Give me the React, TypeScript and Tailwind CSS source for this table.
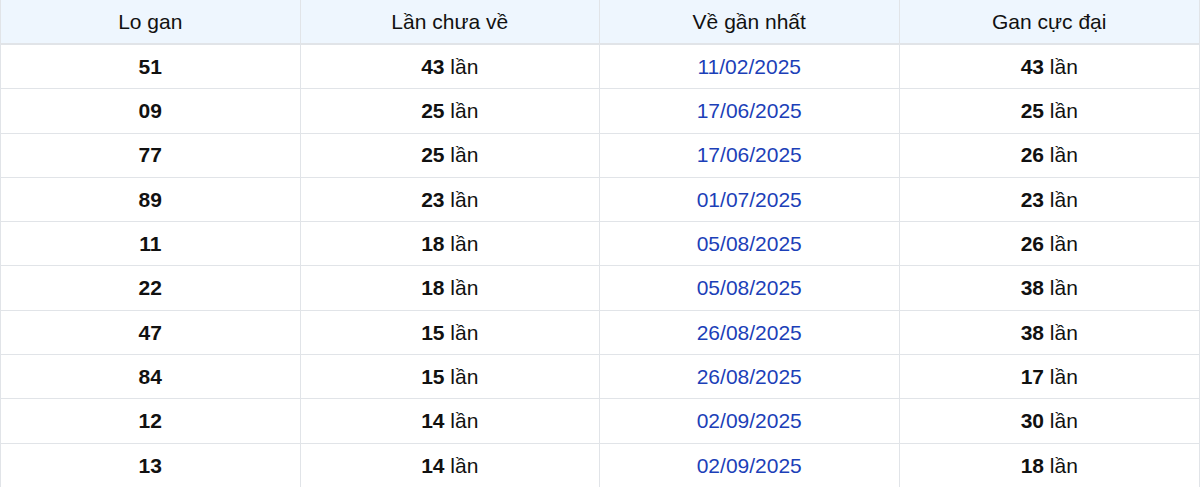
import React from "react";

const rows: [string, string, string, string][] = [
  ["51", "43", "11/02/2025", "43"],
  ["09", "25", "17/06/2025", "25"],
  ["77", "25", "17/06/2025", "26"],
  ["89", "23", "01/07/2025", "23"],
  ["11", "18", "05/08/2025", "26"],
  ["22", "18", "05/08/2025", "38"],
  ["47", "15", "26/08/2025", "38"],
  ["84", "15", "26/08/2025", "17"],
  ["12", "14", "02/09/2025", "30"],
  ["13", "14", "02/09/2025", "18"],
];

export default function App() {
  return (
    <div className="w-[1200px] bg-white text-[21px] text-[#111] overflow-hidden h-[487px]" style={{ fontFamily: '"Liberation Sans", Arial, sans-serif' }}>
      <div className="grid grid-cols-4 bg-[#eef6fe] border-b-2 border-[#e1e4e8] border-l border-r">
        {["Lo gan", "Lần chưa về", "Về gần nhất", "Gan cực đại"].map((h, i) => (
          <div key={h} className={`h-[43px] flex items-center justify-center ${i < 3 ? "border-r border-[#e1e4e8]" : ""}`}>{h}</div>
        ))}
      </div>
      {rows.map((r) => (
        <div key={r[0]} className="grid grid-cols-4 border-b border-[#e1e4e8] border-l border-r">
          <div className="h-[43.3px] flex items-center justify-center border-r border-[#e1e4e8] font-bold">{r[0]}</div>
          <div className="h-[43.3px] flex items-center justify-center border-r border-[#e1e4e8]"><b>{r[1]}</b>&nbsp;lần</div>
          <div className="h-[43.3px] flex items-center justify-center border-r border-[#e1e4e8] text-[#1c3fb8]">{r[2]}</div>
          <div className="h-[43.3px] flex items-center justify-center"><b>{r[3]}</b>&nbsp;lần</div>
        </div>
      ))}
    </div>
  );
}
